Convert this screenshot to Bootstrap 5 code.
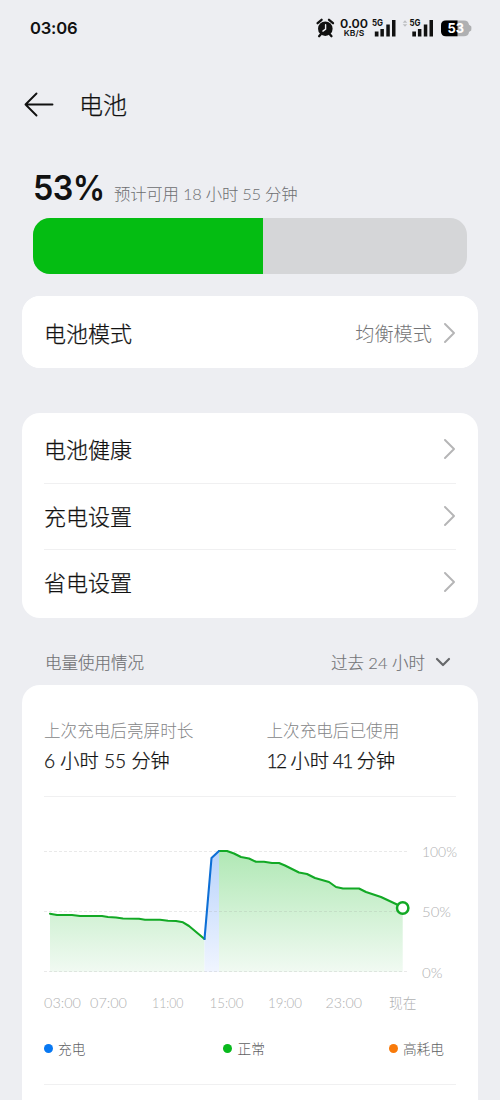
<!DOCTYPE html>
<html lang="zh-CN">
<head>
<meta charset="utf-8">
<meta name="viewport" content="width=device-width, initial-scale=1">
<title>电池</title>
<link rel="stylesheet" href="https://cdn.jsdelivr.net/npm/bootstrap@5.3.0/dist/css/bootstrap.min.css">
<style>
body{background:#edeef2;color:#111;font-family:Lato,"Noto Sans CJK SC",sans-serif;height:1100px;overflow:hidden;line-height:1}
svg{display:block;flex:none}
.screen{width:500px;height:1100px;overflow:hidden}
.status{height:56px;padding:0 28px 0 30px}
.clock{font:600 16.6px/20px Inter,sans-serif;letter-spacing:-.2px}
.topbar{height:97px;padding:0 24px}
.firm{font-weight:300;-webkit-text-stroke:.25px currentColor}
.page-title{font-size:24px;line-height:30px;margin:0 0 0 25px}
.charge{height:65px;padding:0 33px}
.percent{font:600 34px/42px Inter,sans-serif;letter-spacing:-.6px;width:81px;transform:scaleX(.95);transform-origin:0 50%;margin-bottom:9px}
.estimate{font-size:16.4px;font-weight:300;color:#6c6d70;line-height:24px;margin-bottom:12px;letter-spacing:-.22px}
.meter{height:56px;margin:0 33px;border-radius:17px;background:#d5d6d8}
.meter .progress-bar{background:#04bd12}
.panel{border:0;border-radius:18px;background:#fff;overflow:hidden}
.mode-panel{margin:22px 22px 0}
.settings-panel{margin:45px 22px 0;padding:3px 0 2px}
.panel .list-group-item{border:0;padding:2px 22px 0;background:#fff;color:#111;font-size:22px}
.mode{height:72px}
.panel .mode{padding-top:3px}
.item{height:66.6px}
.panel .item + .item::before{content:"";position:absolute;left:22px;right:22px;top:0;height:1px;background:#f0f0f1}
.mode-value{font-size:19.2px;font-weight:300;color:#747577;-webkit-text-stroke:0}
.section-head{height:67px;padding:24px 46px 0 45px;font-size:16.5px;color:#717275;line-height:24px;-webkit-text-stroke-width:.15px}
.usage{margin:0 22px;border-radius:18px 18px 0 0;height:430px;padding:0 22px}
.stats{height:112px;padding-top:33px;border-bottom:1px solid #f0f0f1}
.stats > :first-child{width:222.5px}
.stat-label{font-size:16.6px;font-weight:300;color:#848587;line-height:26px}
.stat-value{font-size:19.2px;line-height:34px}
.narrow{letter-spacing:-1.6px;margin-right:1px}
.used{word-spacing:-1.3px}
.chart{margin-left:-22px}
.legend-row{height:60px;padding:0 12px 0 0;font-size:13.7px;font-weight:300;color:#606163}
.dot{width:9px;height:9px;border-radius:50%;margin-right:5px}
.normal{padding-left:14px}
.end-line{height:1px;background:#f0f0f1;margin-top:5px}
</style>
</head>
<body>
<div class="screen d-flex flex-column">
  <header class="status d-flex align-items-center justify-content-between flex-shrink-0">
    <span class="clock">03:06</span>
    <svg width="158" height="30" viewBox="314 13 158 30" font-family="Inter, sans-serif" fill="#111">
      <circle cx="325.3" cy="28.7" r="7.3"/>
      <path d="M317.6 23.2l4-3.4M333 23.2l-4-3.4M320.8 34.2l-1.7 2M329.8 34.2l1.7 2" stroke="#111" stroke-width="2.3" stroke-linecap="round"/>
      <path d="M325.6 24.8v4.3l-2.7 2" fill="none" stroke="#edeef2" stroke-width="1.4" stroke-linecap="round"/>
      <text x="340" y="27.8" font-size="12.3" font-weight="600" textLength="28" lengthAdjust="spacingAndGlyphs">0.00</text>
      <text x="343.8" y="36.2" font-size="8" font-weight="600" textLength="20.4" lengthAdjust="spacingAndGlyphs">KB/S</text>
      <text x="372" y="26.2" font-size="9.3" font-weight="700" textLength="11" lengthAdjust="spacingAndGlyphs">5G</text>
      <path d="M374.8 31.5h3.7v4.9h-3.7zM380.4 29h3.5v7.4h-3.5zM386.3 24.5h3.5v11.9h-3.5zM392 20h3.5v16.4H392z"/>
      <path d="M402.7 22.8l2.3-2.6 2.3 2.6zM402.7 24.2l2.3 2.6 2.3-2.6z" fill="#bdbec1"/>
      <text x="409.5" y="26.2" font-size="9.3" font-weight="700" textLength="11" lengthAdjust="spacingAndGlyphs">5G</text>
      <path d="M412.3 31.5h3.7v4.9h-3.7zM417.9 29h3.5v7.4h-3.5zM423.8 24.5h3.5v11.9h-3.5zM429.5 20h3.5v16.4h-3.5z"/>
      <path d="M446 20.5h18q4.5 0 5 4.3l2.2 1.4q.6 2.2 0 4.4l-2.2 1.4q-.5 4.3-5 4.3h-18q-5 0-5-5v-5.8q0-5 5-5z" fill="#afb0b2"/>
      <path d="M457.5 20.500H446q-5 0-5 5v5.800q0 5 5 5h11.500z" fill="#000"/>
      <text x="447.500" y="33.200" font-size="13.800" font-weight="700" fill="#fff" textLength="16.500" lengthAdjust="spacingAndGlyphs">53</text>
    </svg>
  </header>

  <nav class="topbar d-flex align-items-center flex-shrink-0">
    <svg width="30" height="26" viewBox="0 0 30 26" fill="none" stroke="#111" stroke-width="1.900" stroke-linecap="round" stroke-linejoin="round"><path d="M12.500 1.500L1.500 12.500l11 11M1.500 12.500h27"/></svg>
    <h1 class="page-title firm">电池</h1>
  </nav>

  <section class="charge d-flex align-items-end flex-shrink-0">
    <span class="percent">53%</span>
    <span class="estimate">预计可用 18 小时 55 分钟</span>
  </section>
  <div class="progress meter flex-shrink-0"><div class="progress-bar" style="width:53%"></div></div>

  <div class="card panel list-group mode-panel flex-shrink-0">
    <div class="list-group-item mode firm d-flex align-items-center">
      <span>电池模式</span>
      <span class="mode-value ms-auto">均衡模式</span>
      <svg class="ms-2" width="16" height="22" viewBox="0 0 16 22" fill="none" stroke="#b5b5b6" stroke-width="1.900" stroke-linecap="round" stroke-linejoin="round"><path d="M5 1l9 9-9 9"/></svg>
    </div>
  </div>

  <div class="card panel list-group settings-panel flex-shrink-0">
    <div class="list-group-item item firm d-flex align-items-center justify-content-between">电池健康<svg width="16" height="22" viewBox="0 0 16 22" fill="none" stroke="#b5b5b6" stroke-width="1.900" stroke-linecap="round" stroke-linejoin="round"><path d="M5 1l9 9-9 9"/></svg></div>
    <div class="list-group-item item firm d-flex align-items-center justify-content-between">充电设置<svg width="16" height="22" viewBox="0 0 16 22" fill="none" stroke="#b5b5b6" stroke-width="1.900" stroke-linecap="round" stroke-linejoin="round"><path d="M5 1l9 9-9 9"/></svg></div>
    <div class="list-group-item item firm d-flex align-items-center justify-content-between">省电设置<svg width="16" height="22" viewBox="0 0 16 22" fill="none" stroke="#b5b5b6" stroke-width="1.900" stroke-linecap="round" stroke-linejoin="round"><path d="M5 1l9 9-9 9"/></svg></div>
  </div>

  <div class="section-head firm d-flex align-items-center justify-content-between flex-shrink-0">
    <span>电量使用情况</span>
    <span class="d-flex align-items-center">过去 24 小时<svg class="ms-2" width="21" height="20" viewBox="0 0 21 20" fill="none" stroke="#67686b" stroke-width="2.200" stroke-linecap="round" stroke-linejoin="round"><path d="M4 6l6 6 6-6"/></svg></span>
  </div>

  <section class="card panel usage flex-shrink-0">
    <div class="stats row g-0">
      <div class="col-auto"><div class="stat-label">上次充电后亮屏时长</div><div class="stat-value firm">6 小时 55 分钟</div></div>
      <div class="col-auto"><div class="stat-label">上次充电后已使用</div><div class="stat-value firm used"><span class="narrow">12</span> 小时 <span class="narrow">41</span> 分钟</div></div>
    </div>
    <svg class="chart" width="456" height="222" viewBox="22 797 456 222" font-family="Lato, 'Noto Sans CJK SC', sans-serif">
      <defs>
        <linearGradient id="green" gradientUnits="userSpaceOnUse" x1="0" y1="851" x2="0" y2="972"><stop stop-color="#b0e8b5"/><stop offset="1" stop-color="#f1faf2"/></linearGradient>
        <linearGradient id="blue" gradientUnits="userSpaceOnUse" x1="0" y1="851" x2="0" y2="972"><stop stop-color="#b9d3fb"/><stop offset="1" stop-color="#f0f5ff"/></linearGradient>
        <path id="before" d="M50 913.700L57 915 72 915 80 916 102 916 108 917 116 917.500 123 918.500 139 918.700 145 919.700 160 919.800 168 920.800 176 921 183 922.300 189 926 204.500 939"/>
        <path id="after" d="M219 851L227 851 234 853.500 241 857 249 858.500 256 861.800 264 861.800 272 863 279 863 285 865.500 299 872.500 307 874 315 878 329 882 336 887 343 888.500 359 888.500 366 892 381 897 397 904.500 402.700 907"/>
      </defs>
      <path fill="url(#green)" d="M50 913.700L57 915 72 915 80 916 102 916 108 917 116 917.500 123 918.500 139 918.700 145 919.700 160 919.800 168 920.800 176 921 183 922.300 189 926 204.500 939V972H50z"/>
      <path fill="url(#green)" d="M219 851L227 851 234 853.500 241 857 249 858.500 256 861.800 264 861.800 272 863 279 863 285 865.500 299 872.500 307 874 315 878 329 882 336 887 343 888.500 359 888.500 366 892 381 897 397 904.500 402.700 907V972H219z"/>
      <path fill="url(#blue)" d="M204.500 939l7-81 7.500-7v121h-14.500z"/>
      <path d="M44 851.500h364M44 911.500h364M44 971.500h364" stroke="#999" stroke-opacity=".22" stroke-dasharray="3 2"/>
      <g fill="none" stroke-width="2.100" stroke-linejoin="round" stroke-linecap="round">
        <use href="#before" stroke="#12a925"/>
        <use href="#after" stroke="#12a925"/>
        <path stroke="#0d6fd6" d="M204.500 939l7-81 7.500-7"/>
      </g>
      <circle cx="402.700" cy="908" r="5.700" fill="#fff" stroke="#12a925" stroke-width="2.500"/>
      <g fill="#b0b1b2" font-size="14.300" font-weight="300">
        <text x="422" y="857" textLength="35" lengthAdjust="spacingAndGlyphs">100%</text>
        <text x="422" y="917.300" textLength="29" lengthAdjust="spacingAndGlyphs">50%</text>
        <text x="422" y="977.500" textLength="20.500" lengthAdjust="spacingAndGlyphs">0%</text>
        <text x="44" y="1008" textLength="37" lengthAdjust="spacingAndGlyphs">03:00</text>
        <text x="90" y="1008" textLength="37" lengthAdjust="spacingAndGlyphs">07:00</text>
        <text x="152" y="1008" textLength="31.500" lengthAdjust="spacingAndGlyphs">11:00</text>
        <text x="209.500" y="1008" textLength="34" lengthAdjust="spacingAndGlyphs">15:00</text>
        <text x="268" y="1008" textLength="34" lengthAdjust="spacingAndGlyphs">19:00</text>
        <text x="325.500" y="1008" textLength="36.500" lengthAdjust="spacingAndGlyphs">23:00</text>
        <text x="389" y="1008" font-size="13.700">现在</text>
      </g>
    </svg>
    <div class="legend-row d-flex align-items-center justify-content-between">
      <span class="d-flex align-items-center"><i class="dot" style="background:#0878f2"></i>充电</span>
      <span class="normal d-flex align-items-center"><i class="dot" style="background:#08b91d"></i>正常</span>
      <span class="d-flex align-items-center"><i class="dot" style="background:#f87a0a"></i>高耗电</span>
    </div>
    <div class="end-line"></div>
  </section>
</div>
<script src="https://cdn.jsdelivr.net/npm/bootstrap@5.3.0/dist/js/bootstrap.bundle.min.js"></script>
</body>
</html>
